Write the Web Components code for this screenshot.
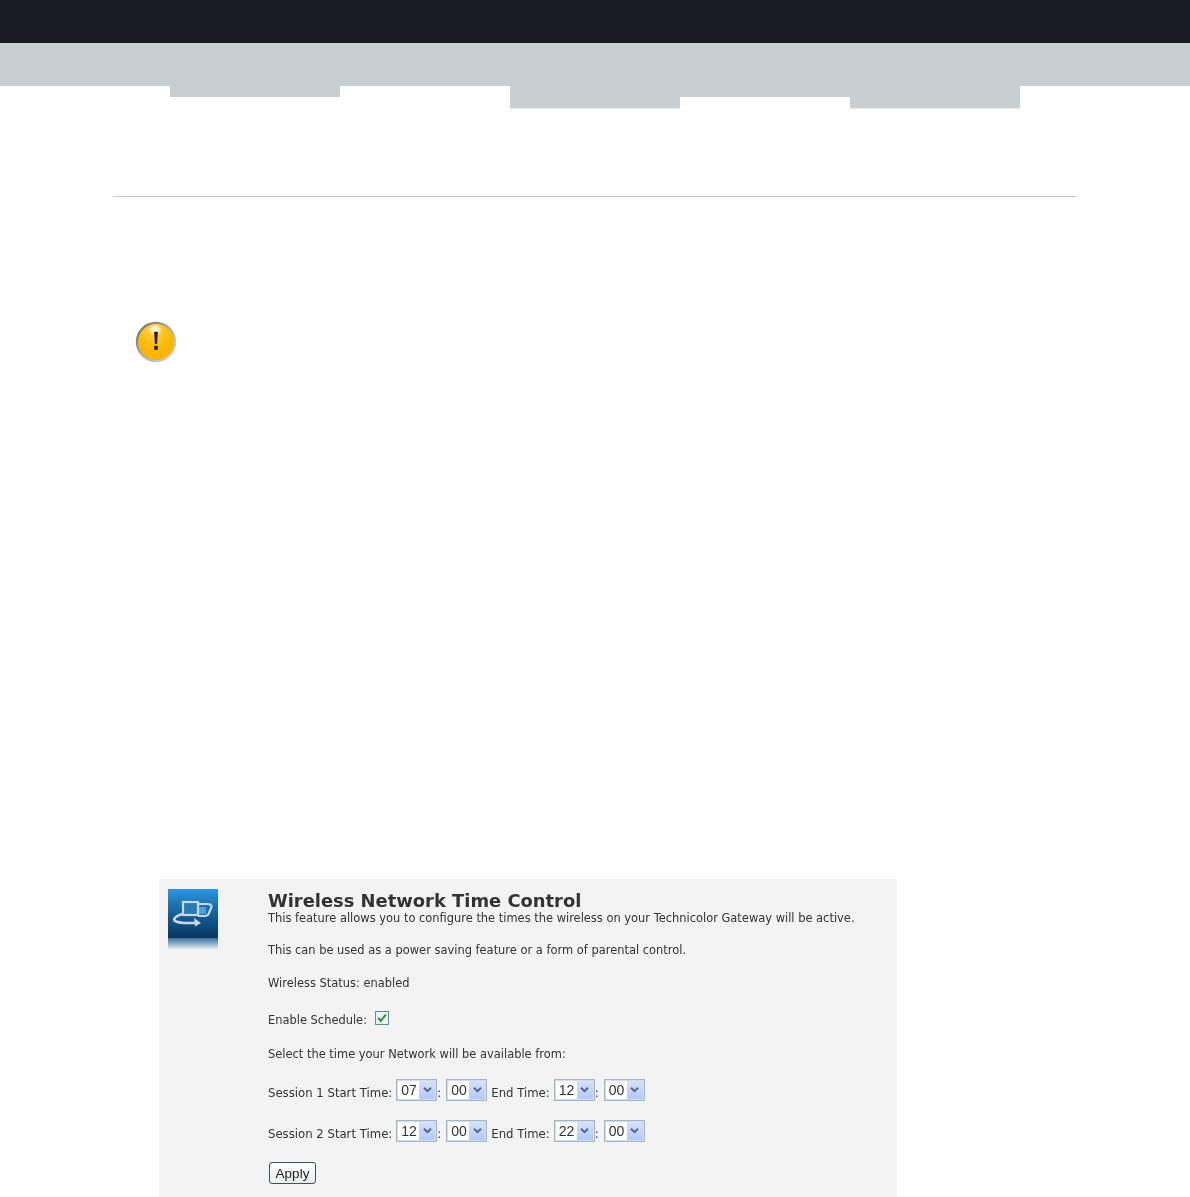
<!DOCTYPE html>
<html>
<head>
<meta charset="utf-8">
<title>Wireless Network Time Control</title>
<style>
    html, body { margin: 0; padding: 0; background: #fff; }
    body { font-family: "DejaVu Sans", Verdana, sans-serif; }
</style>
</head>
<body>
<site-header></site-header>
<alert-icon></alert-icon>
<time-control-panel>
    <p>This feature allows you to configure the times the wireless on your Technicolor Gateway will be active.</p>
    <p>This can be used as a power saving feature or a form of parental control.</p>
    <p class="status">Wireless Status: enabled</p>
    <schedule-toggle>Enable Schedule:</schedule-toggle>
    <p class="select-hint">Select the time your Network will be available from:</p>
    <session-row name="Session 1" start-h="07" start-m="00" end-h="12" end-m="00"></session-row>
    <session-row name="Session 2" start-h="12" start-m="00" end-h="22" end-m="00"></session-row>
    <apply-button>Apply</apply-button>
</time-control-panel>

<script>
/**
 * Dark top bar, grey nav bar and the row of empty tabs hanging below it,
 * closed by the thin rule.
 */
class SiteHeader extends HTMLElement {
    constructor() {
        super();
        this.attachShadow({mode: "open"});
        this.shadowRoot.innerHTML = `
            <style>
                :host { display: block; }
                .top { height: 43px; background: #1a1b23; }
                .nav { height: 43px; background: #c7cfd2; }
                .tabs { display: flex; height: 110px; align-items: flex-start; }
                .tabs div { width: 170px; background: #c7cfd2; }
                .short { height: 11px; }
                .tall { height: 22px; border-bottom: 1px solid #e6eaec; }
                .none { height: 0; }
                hr { margin: 0 113px; border: 0; height: 1px; background: #c3ccd6; }
            </style>
            <div class="top"></div>
            <div class="nav"></div>
            <div class="tabs">
                <div class="none"></div>
                <div class="short"></div>
                <div class="none"></div>
                <div class="tall"></div>
                <div class="short"></div>
                <div class="tall"></div>
            </div>
            <hr>
        `;
    }
}

/**
 * Round yellow warning sign.
 */
class AlertIcon extends HTMLElement {
    constructor() {
        super();
        this.attachShadow({mode: "open"});
        this.shadowRoot.innerHTML = `
            <style>
                :host { display: block; padding: 124px 0 0 135px; height: 42px; }
                svg { display: block; }
            </style>
            <svg width="42" height="42" viewBox="0 0 42 42">
                <defs>
                    <linearGradient id="ring" x1="0" y1="0" x2="1" y2="1">
                        <stop offset="0" stop-color="#5f5f5f"/>
                        <stop offset="0.45" stop-color="#a8a8a8"/>
                        <stop offset="1" stop-color="#dcdcdc"/>
                    </linearGradient>
                    <radialGradient id="gold" cx="0.45" cy="0.2" r="0.9">
                        <stop offset="0" stop-color="#ffd24a"/>
                        <stop offset="0.5" stop-color="#fdbb08"/>
                        <stop offset="1" stop-color="#f8ae00"/>
                    </radialGradient>
                    <radialGradient id="shine" cx="0.5" cy="0.5" r="0.5">
                        <stop offset="0" stop-color="#fff" stop-opacity="1"/>
                        <stop offset="0.35" stop-color="#fff" stop-opacity="0.75"/>
                        <stop offset="1" stop-color="#fff" stop-opacity="0"/>
                    </radialGradient>
                </defs>
                <circle cx="21" cy="21" r="20.2" fill="url(#ring)"/>
                <circle cx="21" cy="21" r="18" fill="url(#gold)"/>
                <ellipse cx="20" cy="8.5" rx="7.5" ry="6" fill="url(#shine)"/>
                <path d="M19.2 10.8h3.6l-.7 12.2h-2.2z" fill="#1d1d1d"/>
                <rect x="19.2" y="24.8" width="3.6" height="3.9" fill="#1d1d1d"/>
            </svg>
        `;
    }
}

/**
 * The grey card: blue picture on the left, title and slotted form on the right.
 */
class TimeControlPanel extends HTMLElement {
    constructor() {
        super();
        this.attachShadow({mode: "open"});
        this.shadowRoot.innerHTML = `
            <style>
                :host {
                    display: grid;
                    grid-template-columns: 50px 1fr;
                    column-gap: 50px;
                    width: 720px;
                    height: 308px;
                    margin: 516px 0 0 159px;
                    padding: 10px 9px 0;
                    background: #f3f3f3;
                    color: #333;
                    font: 11.45px/16px "DejaVu Sans", Verdana, sans-serif;
                    filter: blur(0.3px);
                }
                svg { display: block; }
                h1 {
                    margin: 2px 0 0;
                    font-size: 17.9px;
                    line-height: 19px;
                    font-weight: bold;
                    color: #333;
                }
                ::slotted(p) { margin: 0 0 16px; }
                ::slotted(.status) { margin-top: 17px; margin-bottom: 22px; }
                ::slotted(.select-hint) { margin-bottom: 17px; }
            </style>
            <svg width="50" height="60" viewBox="0 0 50 60">
                <defs>
                    <linearGradient id="sky" x1="0" y1="0" x2="0" y2="1">
                        <stop offset="0" stop-color="#2c97e6"/>
                        <stop offset="0.45" stop-color="#15669f"/>
                        <stop offset="1" stop-color="#0c3560"/>
                    </linearGradient>
                    <linearGradient id="fade" x1="0" y1="0" x2="0" y2="1">
                        <stop offset="0" stop-color="#34709f"/>
                        <stop offset="1" stop-color="#e6edf2"/>
                    </linearGradient>
                </defs>
                <rect width="50" height="49" fill="url(#sky)"/>
                <rect y="49" width="50" height="11" fill="url(#fade)"/>
                <path d="M30 15h9q5 0 4.500 3l-2.500 6q-1 3-4 3h-7" fill="#1d6ea9" stroke="#c9d8e2" stroke-width="2.200"/>
                <rect x="31" y="18" width="7" height="7" fill="#4aa3de"/>
                <rect x="15" y="13" width="15" height="13" fill="#2a7ab8" stroke="#c9d8e2" stroke-width="2.200"/>
                <path d="M14 25Q5 28 6.500 31.500q2 2 10 2.500h13" fill="none" stroke="#c9d8e2" stroke-width="2.600"/>
                <path d="M26 29l7 5-6 3.500z" fill="#c9d8e2"/>
            </svg>
            <div>
                <h1>Wireless Network Time Control</h1>
                <slot></slot>
            </div>
        `;
    }
}

/**
 * Label plus the ticked checkbox.
 */
class ScheduleToggle extends HTMLElement {
    constructor() {
        super();
        this.attachShadow({mode: "open"});
        this.shadowRoot.innerHTML = `
            <style>
                :host { display: flex; align-items: center; gap: 8px; height: 14px; margin: 5px 0 19px; }
                svg { display: block; margin-top: -5px; }
            </style>
            <slot></slot>
            <svg width="14" height="14" viewBox="0 0 14 14">
                <rect x="0.5" y="0.5" width="13" height="13" fill="#eef2f6" stroke="#5f8aa8"/>
                <path d="M3.200 7l2.600 3L10.800 3.600" fill="none" stroke="#1f9a2c" stroke-width="2"/>
            </svg>
        `;
    }
}

/**
 * One time dropdown, drawn in the old XP style.
 */
class TimeSelect extends HTMLElement {
    constructor() {
        super();
        this.attachShadow({mode: "open"});
        this.shadowRoot.innerHTML = `
            <style>
                :host {
                    display: inline-flex;
                    align-items: center;
                    justify-content: space-between;
                    box-sizing: border-box;
                    width: 41px;
                    height: 22px;
                    padding: 1px 1px 1px 4px;
                    background: #fff;
                    border: 1px solid #a3b7cb;
                    outline: 1px solid #d4dde6;
                    outline-offset: -2px;
                    color: #333;
                    font: 14px "Liberation Sans", Arial, sans-serif;
                }
                span { display: block; margin-top: -1px; }
                .arrow {
                    display: flex;
                    align-items: center;
                    justify-content: center;
                    width: 16px;
                    height: 18px;
                    background: linear-gradient(#d6e1fa, #b2c9f9);
                }
            </style>
            <span>${this.getAttribute("value") || ""}</span>
            <div class="arrow">
                <svg width="11" height="8" viewBox="0 0 11 8">
                    <path d="M2 1.800l3.500 3.400 3.500-3.400" fill="none" stroke="#55658a" stroke-width="2"/>
                </svg>
            </div>
        `;
    }
}

/**
 * Row with the start and end time of a session.
 */
class SessionRow extends HTMLElement {
    constructor() {
        super();
        this.attachShadow({mode: "open"});
        this.shadowRoot.innerHTML = `
            <style>
                :host {
                    display: flex;
                    align-items: center;
                    height: 22px;
                    margin-bottom: 19px;
                    font-size: 11.7px;
                }
                .label { margin-top: 5px; }
                .lead { margin-right: 4px; }
                .colon { width: 9px; margin-top: 5px; text-align: left; }
                .end { margin: 5px 4px 0; }
            </style>
            <span class="label lead">${this.getAttribute("name")} Start Time:</span>
            <time-select value="${this.getAttribute("start-h")}"></time-select>
            <span class="colon">:</span>
            <time-select value="${this.getAttribute("start-m")}"></time-select>
            <span class="end">End Time:</span>
            <time-select value="${this.getAttribute("end-h")}"></time-select>
            <span class="colon">:</span>
            <time-select value="${this.getAttribute("end-m")}"></time-select>
        `;
    }
}

/**
 * Small rounded form button.
 */
class ApplyButton extends HTMLElement {
    constructor() {
        super();
        this.attachShadow({mode: "open"});
        this.shadowRoot.innerHTML = `
            <style>
                :host { display: block; padding-top: 1px; }
                button {
                    display: block;
                    box-sizing: border-box;
                    width: 47px;
                    height: 22px;
                    margin-left: 1px;
                    padding: 0;
                    border: 1px solid #34536f;
                    border-radius: 3px;
                    background: linear-gradient(#fff, #ececec);
                    color: #222;
                    font: 13.5px "Liberation Sans", Arial, sans-serif;
                }
            </style>
            <button type="button"><slot></slot></button>
        `;
    }
}

customElements.define("site-header", SiteHeader);
customElements.define("alert-icon", AlertIcon);
customElements.define("time-control-panel", TimeControlPanel);
customElements.define("schedule-toggle", ScheduleToggle);
customElements.define("time-select", TimeSelect);
customElements.define("session-row", SessionRow);
customElements.define("apply-button", ApplyButton);
</script>
</body>
</html>
